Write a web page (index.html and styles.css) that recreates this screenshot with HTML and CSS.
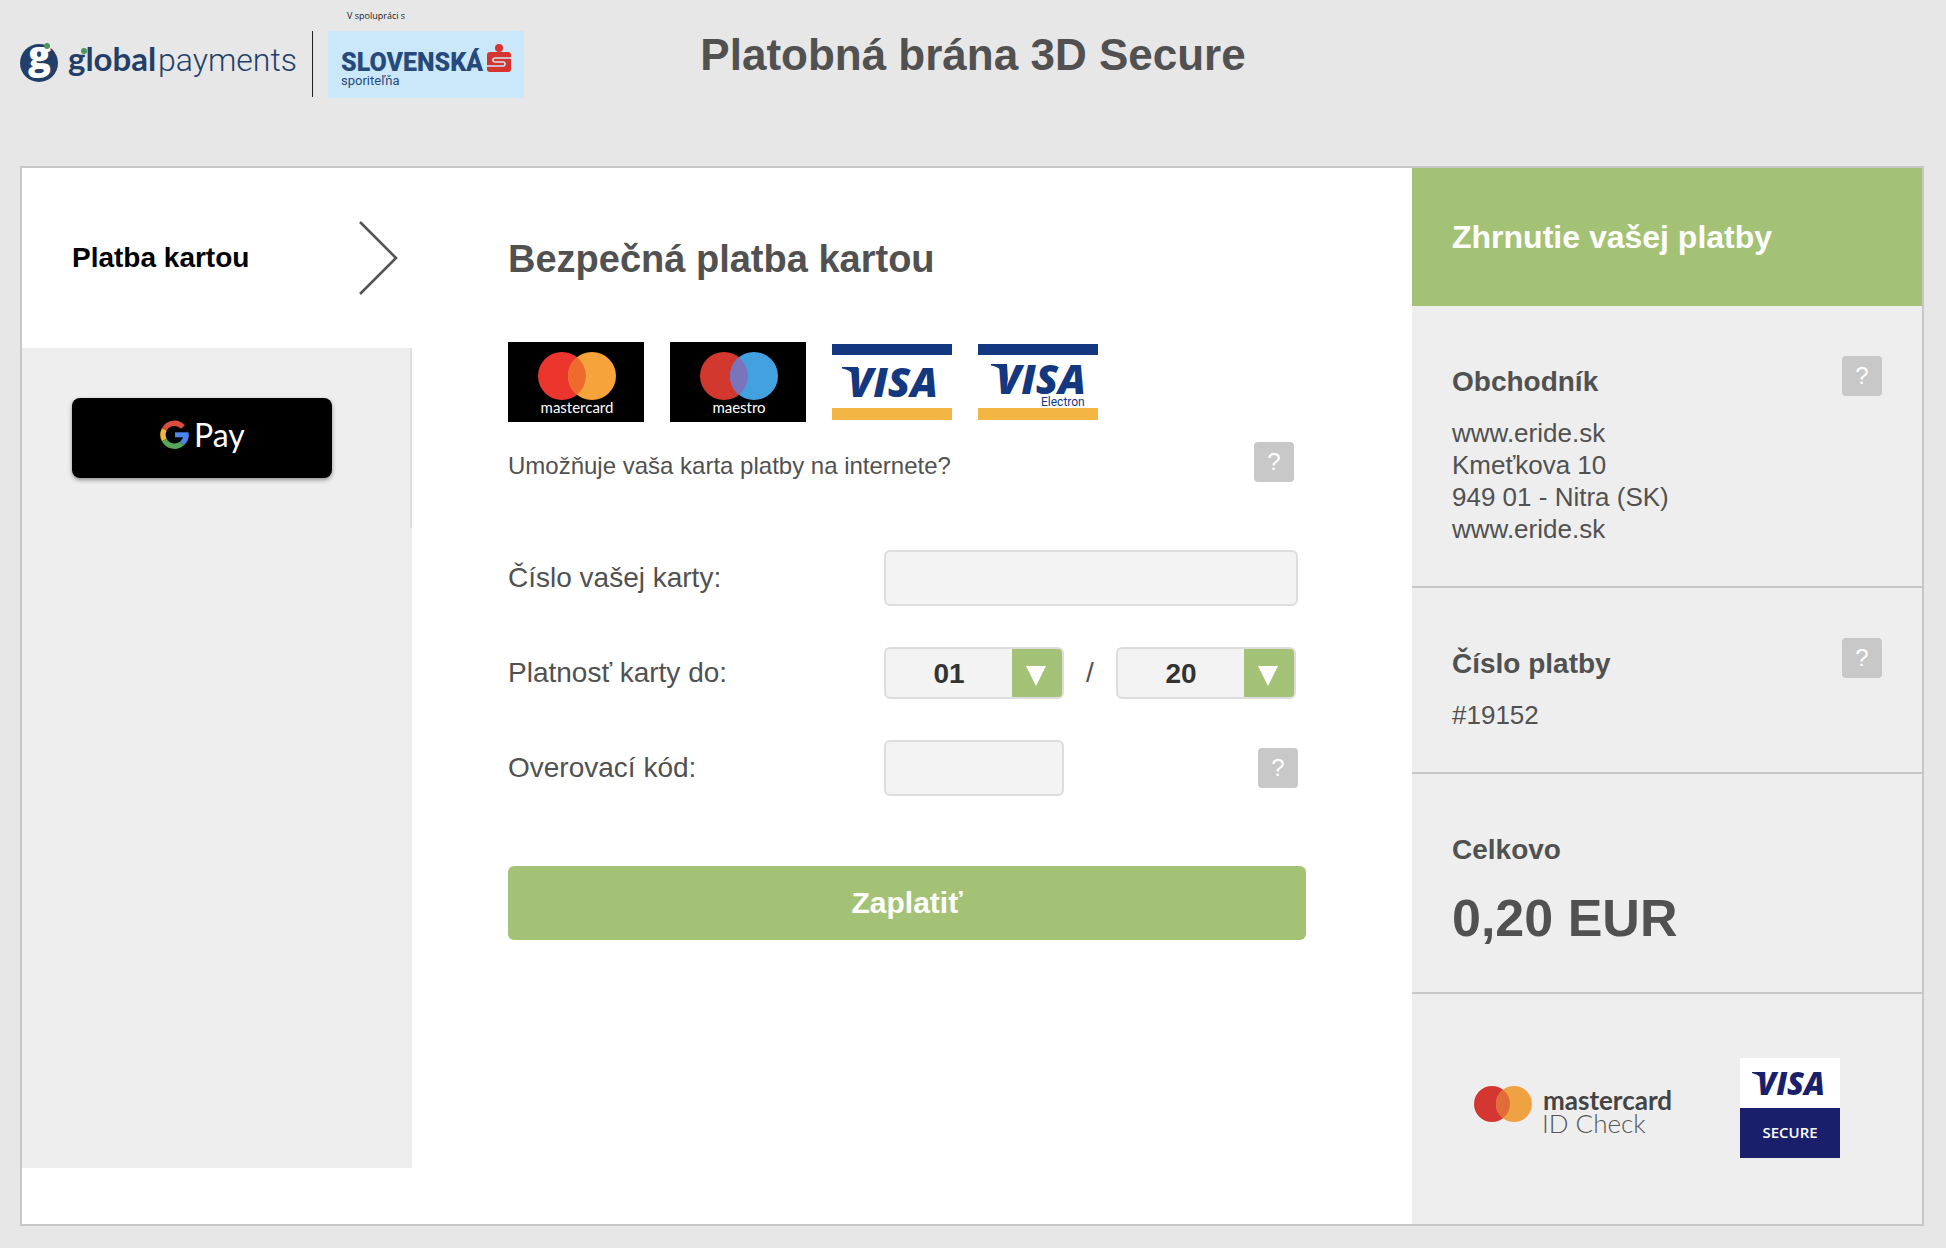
FILE: index.html
```html
<!DOCTYPE html>
<html lang="sk">
<head>
  <meta charset="UTF-8">
  <meta name="viewport" content="width=device-width, initial-scale=1.0">
  <title>Platobná brána 3D Secure</title>
  <link rel="stylesheet" href="styles.css">
</head>
<body>

  <header class="header">
    <svg class="logo" width="504" height="98" viewBox="0 0 504 98" role="img" aria-label="Global Payments, Slovenská sporiteľňa">
      <circle cx="19" cy="63" r="19" fill="#233f69"/>
      <text class="logo-g" x="8" y="69">g</text>
      <circle cx="27" cy="46" r="3" fill="#4b9560"/>
      <text class="logo-global" x="48" y="71">global</text>
      <text class="logo-payments" x="138" y="71">payments</text>
      <circle cx="64" cy="51" r="3" fill="#4b9560"/>
      <rect x="292" y="31" width="1" height="66" fill="#222"/>
      <text class="logo-note" x="327" y="19">V spolupráci s</text>
      <rect x="308" y="31" width="196" height="67" fill="#cbe8fa"/>
      <text class="logo-bank" x="321" y="71">SLOVENSKÁ</text>
      <text class="logo-bank-sub" x="321" y="85">sporiteľňa</text>
      <circle cx="479" cy="48" r="4" fill="#d7342d"/>
      <rect x="467" y="52" width="24" height="20" rx="3" fill="#d7342d"/>
      <path d="M491 58H475q-2 0-2 2t2 2h8q2 0 2 2t-2 2H467" fill="none" stroke="#cbe8fa" stroke-width="1.6"/>
    </svg>
    <h1 class="header-title">Platobná brána 3D Secure</h1>
  </header>

  <div class="panel">
    <nav class="sidebar">
      <button class="tab" type="button">
        Platba kartou
        <svg width="38" height="74" viewBox="0 0 38 74" aria-hidden="true">
          <path d="M0 1L36 37L0 73" fill="none" stroke="#555" stroke-width="2.6"/>
        </svg>
      </button>
      <div class="tab-gpay">
        <button class="gpay" type="button" aria-label="Google Pay">
          <svg width="90" height="44" viewBox="0 0 90 44" aria-hidden="true">
            <path d="M26 11A11.5 11.5 0 0 0 7.3 13.4" fill="none" stroke="#db4c3f" stroke-width="5.4"/>
            <path d="M7.3 13.4A11.5 11.5 0 0 0 7.3 24" fill="none" stroke="#f0b53c" stroke-width="5.4"/>
            <path d="M7.3 24A11.5 11.5 0 0 0 24.9 27.5" fill="none" stroke="#57a55a" stroke-width="5.4"/>
            <path d="M24.9 27.5A11.5 11.5 0 0 0 29 18.7" fill="none" stroke="#4a86ec" stroke-width="5.4"/>
            <rect x="18" y="16.3" width="13.6" height="5" fill="#4a86ec"/>
            <text class="gpay-text" x="37" y="31">Pay</text>
          </svg>
        </button>
      </div>
    </nav>

    <main class="main">
      <h2 class="main-title">Bezpečná platba kartou</h2>

      <div class="cards">
        <svg width="136" height="80" viewBox="0 0 136 80" role="img" aria-label="Mastercard">
          <rect width="136" height="80" fill="#000"/>
          <circle cx="54" cy="34" r="24" fill="#ec352c"/>
          <circle cx="84" cy="34" r="24" fill="#f5a33a"/>
          <path d="M69 15.3A24 24 0 0 1 69 52.7A24 24 0 0 1 69 15.3Z" fill="#ef6b2d"/>
          <text class="card-name" x="69" y="71">mastercard</text>
        </svg>
        <svg width="136" height="80" viewBox="0 0 136 80" role="img" aria-label="Maestro">
          <rect width="136" height="80" fill="#000"/>
          <circle cx="54" cy="34" r="24" fill="#d3382e"/>
          <circle cx="84" cy="34" r="24" fill="#43a1df"/>
          <path d="M69 15.3A24 24 0 0 1 69 52.7A24 24 0 0 1 69 15.3Z" fill="#7b73bb"/>
          <text class="card-name" x="69" y="71">maestro</text>
        </svg>
        <svg width="120" height="76" viewBox="0 0 120 76" role="img" aria-label="Visa">
          <rect width="120" height="76" fill="#fff"/>
          <rect width="120" height="11" fill="#14387f"/>
          <rect y="64" width="120" height="12" fill="#f3b544"/>
          <path d="M10 23H26L27 42Q24 27 10 24.5Z" fill="#14387f"/>
          <text class="card-visa" x="16" y="53">VISA</text>
        </svg>
        <svg width="120" height="76" viewBox="0 0 120 76" role="img" aria-label="Visa Electron">
          <rect width="120" height="76" fill="#fff"/>
          <rect width="120" height="11" fill="#14387f"/>
          <rect y="64" width="120" height="12" fill="#f3b544"/>
          <path d="M13 20H29L30 39Q27 24 13 21.5Z" fill="#14387f"/>
          <text class="card-visa" x="18" y="50">VISA</text>
          <text class="card-electron" x="63" y="62">Electron</text>
        </svg>
      </div>

      <div class="question">
        <p>Umožňuje vaša karta platby na internete?</p>
        <button class="help" type="button">?</button>
      </div>

      <form class="form">
        <label for="cislo">Číslo vašej karty:</label>
        <input class="field" type="text" id="cislo">

        <label for="mesiac">Platnosť karty do:</label>
        <div class="expiry">
          <div class="select">
            <select id="mesiac">
              <option>01</option>
              <option>02</option>
              <option>03</option>
              <option>04</option>
              <option>05</option>
              <option>06</option>
              <option>07</option>
              <option>08</option>
              <option>09</option>
              <option>10</option>
              <option>11</option>
              <option>12</option>
            </select>
          </div>
          <span class="slash">/</span>
          <div class="select">
            <select id="rok" aria-label="Rok">
              <option>20</option>
              <option>21</option>
              <option>22</option>
              <option>23</option>
              <option>24</option>
              <option>25</option>
            </select>
          </div>
        </div>

        <label for="kod">Overovací kód:</label>
        <div class="code">
          <input class="field field-short" type="text" id="kod">
          <button class="help" type="button">?</button>
        </div>

        <button class="pay-button" type="submit">Zaplatiť</button>
      </form>
    </main>

    <aside class="summary">
      <h2 class="summary-title">Zhrnutie vašej platby</h2>
      <section class="summary-item">
        <div class="summary-head">
          <h3>Obchodník</h3>
          <button class="help" type="button">?</button>
        </div>
        <p>www.eride.sk<br>Kmeťkova 10<br>949 01 - Nitra (SK)<br>www.eride.sk</p>
      </section>
      <section class="summary-item">
        <div class="summary-head">
          <h3>Číslo platby</h3>
          <button class="help" type="button">?</button>
        </div>
        <p>#19152</p>
      </section>
      <section class="summary-item">
        <div class="summary-head">
          <h3>Celkovo</h3>
        </div>
        <p class="amount">0,20 EUR</p>
      </section>
      <div class="badges">
        <svg width="204" height="56" viewBox="0 0 204 56" role="img" aria-label="Mastercard ID Check">
          <circle cx="18" cy="24" r="18" fill="#d43731"/>
          <circle cx="40" cy="24" r="18" fill="#eea243"/>
          <path d="M29 9.8A18 18 0 0 1 29 38.2A18 18 0 0 1 29 9.8Z" fill="#e26b38"/>
          <text class="idcheck-name" x="69" y="30">mastercard</text>
          <text class="idcheck-sub" x="68" y="53">ID Check</text>
        </svg>
        <svg width="100" height="100" viewBox="0 0 100 100" role="img" aria-label="Visa Secure">
          <rect width="100" height="50" fill="#fff"/>
          <rect y="50" width="100" height="50" fill="#1a1f6c"/>
          <path d="M12 14H24L25 29Q23 17 12 15Z" fill="#1a1f6c"/>
          <text class="secure-visa" x="17" y="37">VISA</text>
          <text class="secure-text" x="50" y="80">SECURE</text>
        </svg>
      </div>
    </aside>
  </div>

</body>
</html>
```

FILE: styles.css
```css
* {
  box-sizing: border-box;
}
body {
  font-family: "Liberation Sans", Arial, sans-serif;
  background-color: #e7e7e7;
  color: #515151;
  margin: 0;
}
h1, h2, h3, p {
  margin: 0;
}
button, input, select {
  font-family: inherit;
}
svg {
  display: block;
  flex-shrink: 0;
  overflow: visible;
}

/* header */
.header {
  display: grid;
  grid-template-columns: 1fr auto 1fr;
  padding: 0 20px 68px;
}
.header-title {
  font-size: 44px;
  line-height: 50px;
  padding-top: 30px;
}
.logo-g {
  font: 800 38px "Open Sans", sans-serif;
  fill: #fff;
}
.logo-global {
  font: bold 33px Lato, sans-serif;
  fill: #233f69;
}
.logo-payments {
  font: 300 32px Roboto, sans-serif;
  fill: #233f69;
}
.logo-note {
  font: 9px "Open Sans", sans-serif;
  fill: #222;
}
.logo-bank {
  font: 900 25px Roboto, sans-serif;
  fill: #274a7c;
}
.logo-bank-sub {
  font: 13px Roboto, sans-serif;
  fill: #274a7c;
}

/* panel */
.panel {
  display: grid;
  grid-template-columns: 390px minmax(0, 1fr) 510px;
  margin: 0 22px 22px 20px;
  border: 2px solid #c8c8c8;
  background-color: #fff;
}
.sidebar {
  background-color: #eee;
  margin-bottom: 56px;
}
.tab {
  display: flex;
  justify-content: space-between;
  align-items: center;
  width: 100%;
  height: 180px;
  padding: 0 14px 0 50px;
  border: none;
  background-color: #fff;
  color: #000;
  font-size: 28px;
  font-weight: bold;
  cursor: pointer;
}
.tab-gpay {
  height: 180px;
  padding: 50px;
  border-right: 2px solid #dfdfdf;
}
.gpay {
  display: flex;
  justify-content: center;
  align-items: center;
  width: 260px;
  height: 80px;
  border: none;
  border-radius: 8px;
  background-color: #000;
  box-shadow: 0 2px 4px rgba(0, 0, 0, 0.4);
  cursor: pointer;
}
.gpay-text {
  font: 32px Lato, sans-serif;
  fill: #fff;
}

/* payment form */
.main {
  padding: 69px 106px 40px 96px;
}
.main-title {
  font-size: 38px;
  line-height: 44px;
  margin-bottom: 61px;
}
.cards {
  display: flex;
  align-items: center;
  gap: 26px;
  margin-bottom: 20px;
}
.card-name {
  font: 15px Lato, sans-serif;
  fill: #fff;
  text-anchor: middle;
}
.card-visa {
  font: italic 800 41px "Open Sans", sans-serif;
  fill: #14387f;
}
.card-electron {
  font: 12px Roboto, sans-serif;
  fill: #14387f;
}
.question {
  display: flex;
  justify-content: space-between;
  align-items: flex-end;
  padding-right: 12px;
  margin-bottom: 68px;
  font-size: 24px;
  line-height: 32px;
}
.help {
  width: 40px;
  height: 40px;
  padding: 0;
  border: none;
  border-radius: 4px;
  background-color: #c8c8c8;
  color: #fff;
  font-size: 24px;
  cursor: pointer;
}
.form {
  display: grid;
  grid-template-columns: 376px minmax(0, 414px);
  grid-template-rows: 56px 56px 56px auto;
  align-items: center;
  row-gap: 39px;
  font-size: 28px;
}
.field {
  width: 100%;
  height: 56px;
  padding: 0 16px;
  border: 2px solid #ddd;
  border-radius: 6px;
  background-color: #f3f3f3;
  color: #333;
  font-size: 28px;
}
.field-short {
  width: 180px;
}
.expiry {
  display: flex;
  align-items: center;
}
.slash {
  width: 52px;
  text-align: center;
}
.select {
  display: grid;
  align-items: center;
  width: 180px;
}
.select select {
  grid-area: 1 / 1;
  appearance: none;
  height: 52px;
  padding: 0 50px 0 0;
  border: 2px solid #ddd;
  border-radius: 6px;
  background: linear-gradient(#a4c276, #a4c276) right / 50px 100% no-repeat #f3f3f3;
  color: #333;
  font-size: 28px;
  font-weight: bold;
  text-align-last: center;
}
/* white arrow over the green end of the select */
.select::after {
  content: "";
  grid-area: 1 / 1;
  justify-self: end;
  width: 20px;
  height: 20px;
  margin: 6px 18px 0 0;
  background-color: #fff;
  clip-path: polygon(0 0, 100% 0, 50% 100%);
  pointer-events: none;
}
.code {
  display: flex;
  justify-content: space-between;
  align-items: center;
}
.pay-button {
  grid-column: 1 / -1;
  height: 74px;
  margin-top: 31px;
  margin-right: -8px;
  border: none;
  border-radius: 6px;
  background-color: #a4c276;
  color: #fff;
  font-size: 30px;
  font-weight: bold;
  cursor: pointer;
}

/* summary */
.summary {
  background-color: #eee;
}
.summary-title {
  display: flex;
  align-items: center;
  height: 138px;
  padding: 0 40px;
  background-color: #a4c276;
  color: #fff;
  font-size: 32px;
}
.summary-item {
  padding: 50px 40px 41px;
  border-bottom: 2px solid #c8c8c8;
  font-size: 26px;
  line-height: 32px;
}
.summary-head {
  display: flex;
  justify-content: space-between;
  align-items: flex-end;
  min-height: 40px;
  margin-bottom: 21px;
}
.summary-head h3 {
  font-size: 28px;
  line-height: 28px;
}
.amount {
  font-size: 52px;
  font-weight: bold;
  line-height: 66px;
}
.badges {
  display: flex;
  justify-content: space-between;
  align-items: center;
  height: 230px;
  padding: 0 82px 2px 62px;
}
.idcheck-name {
  font: bold 26px Lato, sans-serif;
  fill: #444;
}
.idcheck-sub {
  font: 300 26px Lato, sans-serif;
  fill: #555;
}
.secure-visa {
  font: italic 800 31px "Open Sans", sans-serif;
  fill: #1a1f6c;
}
.secure-text {
  font: 600 15px "Open Sans", sans-serif;
  fill: #fff;
  text-anchor: middle;
}
```
